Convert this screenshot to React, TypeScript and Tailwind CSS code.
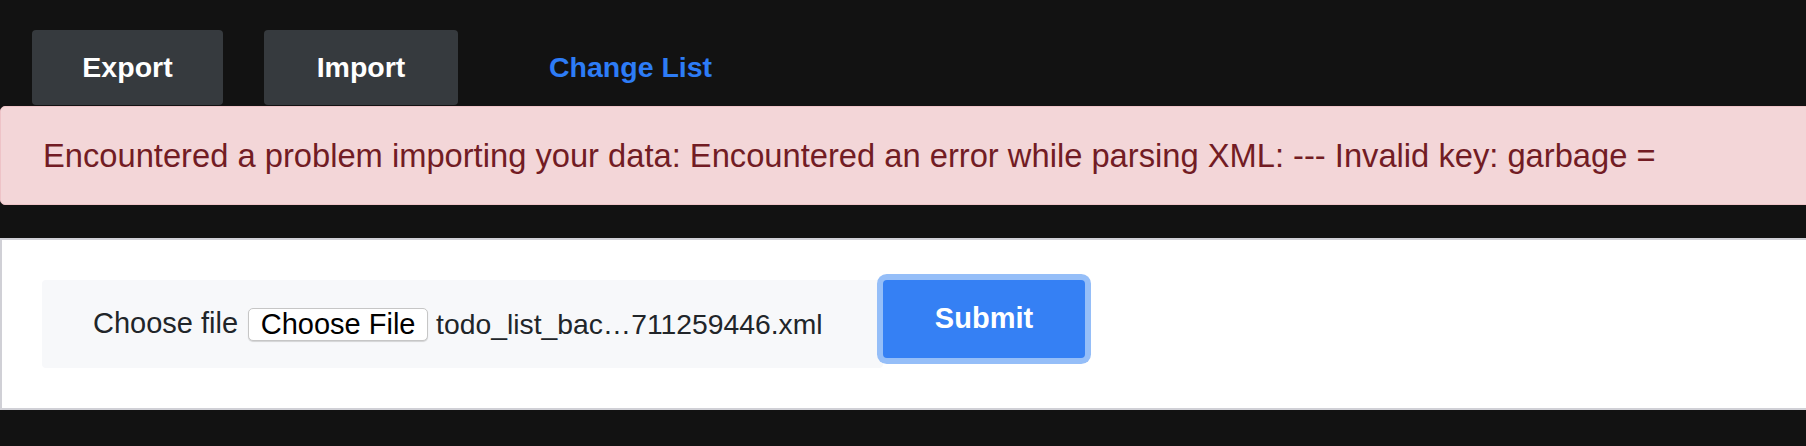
export default function App() {
  return (
    <div className="min-h-[446px] overflow-hidden bg-[#121212] pt-[30px] font-['Liberation_Sans',Arial,sans-serif]">
      <nav className="flex gap-[41px] pl-[32px]">
        <button className="h-[75px] w-[191px] rounded-[4px] bg-[#363a3e] text-[28.5px] font-bold text-white">Export</button>
        <button className="h-[75px] w-[194px] rounded-[4px] bg-[#363a3e] text-[28.5px] font-bold text-white">Import</button>
        <button className="h-[75px] px-[50px] text-[28.5px] font-bold text-[#2d7cf6]">Change List</button>
      </nav>

      <div className="-mr-[12px] mt-[1px] flex h-[99px] items-center rounded-[5px] border border-[#eec3c7] bg-[#f3d6d8] px-[42px] text-[32.7px] text-[#721c24]">
        Encountered a problem importing your data: Encountered an error while parsing XML: --- Invalid key: garbage =
      </div>

      <div className="-mr-[12px] mt-[33px] h-[172px] border-2 border-[#d0d0d6] bg-white p-[40px]">
        <form className="flex items-start" onSubmit={e => e.preventDefault()}>
          <div className="flex h-[88px] w-[841px] items-center rounded-[4px] bg-[#f7f8fa] pl-[51px] text-[29px] text-[#212529]">
            <span>Choose file</span>
            <span className="ml-[10px] inline-flex h-[33px] w-[180px] items-center justify-center rounded-[5px] border border-[#c6c6c6] bg-white leading-none text-black shadow-[0_1px_1px_rgba(0,0,0,0.15)]">Choose File</span>
            <span className="ml-[8px] text-[28.3px]">todo_list_bac…711259446.xml</span>
          </div>
          <button type="submit" className="h-[78px] w-[202px] rounded-[4px] bg-[#3580f4] text-[29px] font-bold text-white shadow-[0_0_0_6px_#95bef8]">Submit</button>
        </form>
      </div>
    </div>
  )
}
